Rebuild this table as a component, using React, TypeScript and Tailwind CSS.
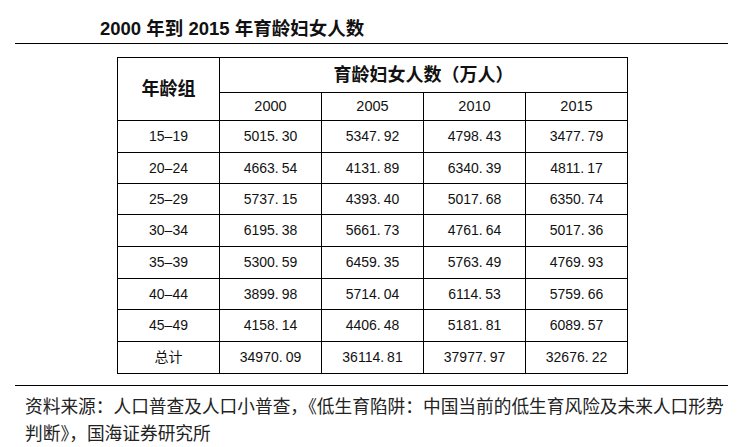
const years = ["2000", "2005", "2010", "2015"];

const rows = [
  { group: "15–19", values: ["5015.30", "5347.92", "4798.43", "3477.79"], h: "h-[32px]" },
  { group: "20–24", values: ["4663.54", "4131.89", "6340.39", "4811.17"], h: "h-[31px]" },
  { group: "25–29", values: ["5737.15", "4393.40", "5017.68", "6350.74"], h: "h-[31px]" },
  { group: "30–34", values: ["6195.38", "5661.73", "4761.64", "5017.36"], h: "h-[32px]" },
  { group: "35–39", values: ["5300.59", "6459.35", "5763.49", "4769.93"], h: "h-[32px]" },
  { group: "40–44", values: ["3899.98", "5714.04", "6114.53", "5759.66"], h: "h-[31px]" },
  { group: "45–49", values: ["4158.14", "4406.48", "5181.81", "6089.57"], h: "h-[32px]" },
  { group: "总计", values: ["34970.09", "36114.81", "37977.97", "32676.22"], h: "h-[32px]" },
];

const sans = "font-['Liberation_Sans','Noto_Sans_CJK_SC',sans-serif]";

function Num({ v }: { v: string }) {
  const [a, b] = v.split(".");
  return (
    <span>
      {a}.<span className="ml-[3px]">{b}</span>
    </span>
  );
}

export default function App() {
  return (
    <div className={`w-[743px] h-[447px] bg-white text-[#111] overflow-hidden ${sans}`}>
      <div className="mx-[15px] pt-[15px] border-b border-black">
        <h1 className="pl-[85px] text-[18.5px] font-bold leading-[27px] pb-[1px]">
          2000 年到 2015 年育龄妇女人数
        </h1>
      </div>

      <table className="ml-[117px] mt-[13px] w-[510px] table-fixed border-collapse text-[14px]">
        <colgroup>
          <col className="w-[102px]" />
          <col className="w-[102px]" />
          <col className="w-[102px]" />
          <col className="w-[102px]" />
          <col className="w-[102px]" />
        </colgroup>
        <thead>
          <tr className="h-[35px]">
            <th
              rowSpan={2}
              className="border border-black text-[18px] font-bold text-center align-middle pt-[1px]"
            >
              年龄组
            </th>
            <th colSpan={4} className="border border-black text-[18px] font-bold text-center">
              育龄妇女人数（万人）
            </th>
          </tr>
          <tr className="h-[28px]">
            {years.map((y) => (
              <th key={y} className="border border-black font-normal text-center text-[14.5px]">
                {y}
              </th>
            ))}
          </tr>
        </thead>
        <tbody>
          {rows.map((r) => (
            <tr key={r.group} className={r.h}>
              <td className="border border-black text-center">{r.group}</td>
              {r.values.map((v, i) => (
                <td key={i} className="border border-black text-center">
                  <Num v={v} />
                </td>
              ))}
            </tr>
          ))}
        </tbody>
      </table>

      <div className="mx-[15px] mt-[11px] border-t border-black pt-[8px] pl-[10px] text-[17.7px] leading-[27px] text-[#222] font-['Liberation_Serif','Noto_Sans_CJK_SC',serif]">
        <p>资料来源：人口普查及人口小普查，《低生育陷阱：中国当前的低生育风险及未来人口形势</p>
        <p>判断》，国海证券研究所</p>
      </div>
    </div>
  );
}
